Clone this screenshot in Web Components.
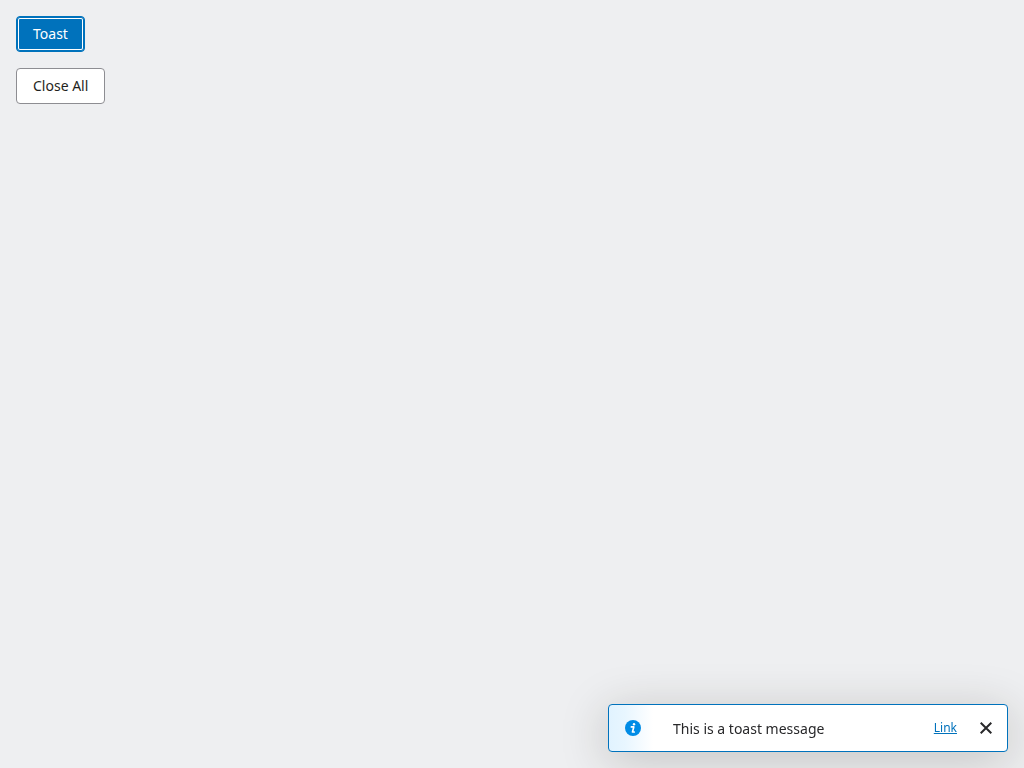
<!DOCTYPE html>
<html lang="en">
<head>
<meta charset="utf-8">
<title>Toast</title>
<style>
  body {
    margin: 0;
    background: #eeeff1;
    color: #28282a;
    font: 14px/20px "Noto Sans", sans-serif;
  }
</style>
</head>
<body>
<demo-stack>
  <demo-button variant="primary">Toast</demo-button>
  <demo-button>Close All</demo-button>
</demo-stack>
<demo-toast>
  This is a toast message
  <demo-link slot="action" href="#">Link</demo-link>
</demo-toast>

<script>
class BaseElement extends HTMLElement {
  connectedCallback() {
    if (this.shadowRoot) return;
    this.attachShadow({ mode: "open" }).innerHTML = this.render();
  }
}

customElements.define("demo-stack", class extends BaseElement {
  render() {
    return `
      <style>
        :host { display: flex; flex-direction: column; align-items: flex-start; gap: 16px; padding: 16px; }
      </style>
      <slot></slot>`;
  }
});

customElements.define("demo-button", class extends BaseElement {
  render() {
    return `
      <style>
        :host { display: block; }
        button {
          display: block;
          height: 36px;
          padding: 0 16px;
          border: 1px solid #8d8d92;
          border-radius: 4px;
          background: #fff;
          color: #1f1f21;
          font: inherit;
          cursor: pointer;
        }
        :host([variant="primary"]) button {
          border-color: #0072bc;
          background: #0072bc;
          color: #fff;
          box-shadow: inset 0 0 0 1px #0072bc, inset 0 0 0 2px #fff;
        }
      </style>
      <button type="button"><slot></slot></button>`;
  }
});

customElements.define("demo-link", class extends BaseElement {
  render() {
    return `
      <style>
        :host { display: block; }
        a { display: block; color: #0072bc; font-size: 12px; line-height: 16px; text-decoration: underline; }
      </style>
      <a href="${this.getAttribute("href")}"><slot></slot></a>`;
  }
});

customElements.define("demo-toast", class extends BaseElement {
  render() {
    return `
      <style>
        :host {
          position: fixed;
          right: 16px;
          bottom: 16px;
          box-sizing: border-box;
          display: flex;
          align-items: center;
          width: 400px;
          max-width: calc(100% - 32px);
          min-height: 48px;
          padding: 0 8px 0 16px;
          border: 1px solid #0072bc;
          border-radius: 4px;
          background: linear-gradient(to right, #e1f3ff, #e8f6ff 16px, #fff 44px) #fff;
          box-shadow: 0 8px 48px rgba(40, 35, 25, 0.22);
        }
        .info { display: block; width: 16px; height: 16px; margin-right: 32px; }
        .message { flex: 1; padding-top: 2px; }
        button {
          display: grid;
          place-items: center;
          width: 26px;
          height: 32px;
          margin-left: 16px;
          padding: 0;
          border: 0;
          background: none;
          color: #28282a;
          cursor: pointer;
        }
      </style>
      <svg class="info" viewBox="0 0 16 16" aria-hidden="true">
        <circle cx="8" cy="8" r="8" fill="#008ce6"/>
        <circle cx="9" cy="4.2" r="1.2" fill="#fff"/>
        <path d="M6.4 6.9h2.4L7.5 12h1.7" fill="none" stroke="#fff" stroke-width="1.7" stroke-linejoin="round" stroke-linecap="round"/>
      </svg>
      <div class="message" role="status"><slot></slot></div>
      <slot name="action"></slot>
      <button type="button" aria-label="Close">
        <svg width="12" height="12" viewBox="0 0 12 12" aria-hidden="true">
          <path d="M.7.7 11.3 11.3M11.3.7.7 11.3" fill="none" stroke="currentColor" stroke-width="2"/>
        </svg>
      </button>`;
  }
});
</script>
</body>
</html>
